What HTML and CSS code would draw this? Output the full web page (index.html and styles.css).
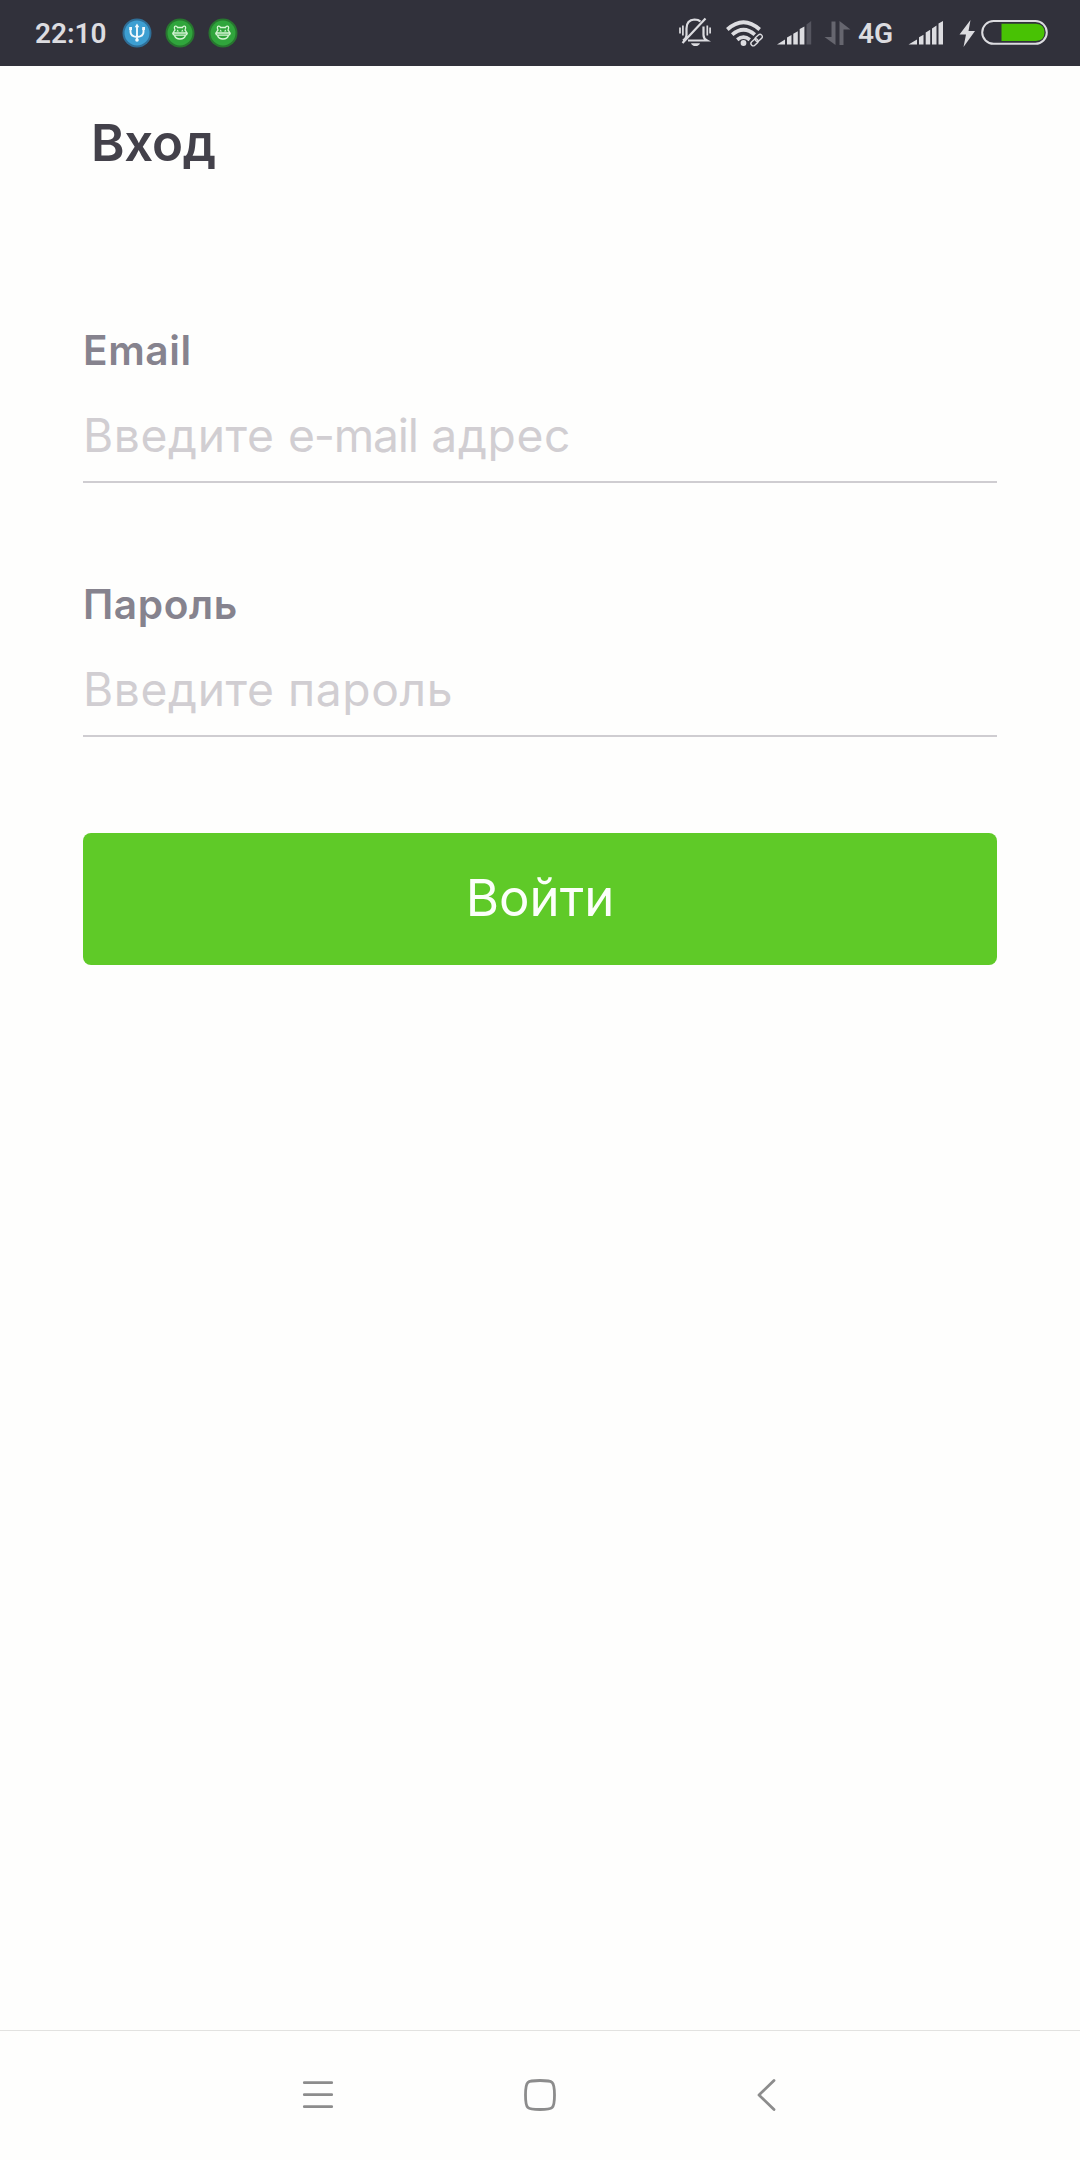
FILE: index.html
```html
<!DOCTYPE html>
<html lang="ru">
<head>
<meta charset="utf-8">
<title>Вход</title>
<link rel="stylesheet" href="styles.css">
</head>
<body>
<header class="status">
  <span class="clock">22:10</span>
  <svg class="badge" viewBox="122 18 30 30">
    <circle cx="137" cy="33" r="14.5" fill="#2f6f98"/><circle cx="137" cy="33" r="12.5" fill="#3d9fd2"/>
    <g fill="none" stroke="#f1f8fc" stroke-width="1.9"><path d="M137 26v14M130.500 28.500v3.500q0 4.500 6.500 5M143.500 28.500v3.500q0 4.500 -6.500 5"/></g>
    <path fill="#f1f8fc" d="M137 23.500l2.300 3.700h-4.600zM129.200 27h2.800v3h-2.800zM142.200 27h2.800v3h-2.800z"/><circle cx="137" cy="40" r="1.800" fill="#f1f8fc"/>
  </svg>
  <svg class="badge" viewBox="165 18 30 30">
    <circle cx="180" cy="33" r="14.500" fill="#27772f"/><circle cx="180" cy="33" r="12.500" fill="#30a53c"/>
    <g fill="none" stroke="#d8f5d6" stroke-width="1.300"><path d="M175 30q-1.500-3.500.5-3.800 1.500-.2 2 1.300h5q.5-1.500 2-1.300 2 .3.500 3.800 1.500 1.500 1.500 3h-13q0-1.500 1.500-3zM172.700 33.200h14.600q-.3 2-2 2h-10.600q-1.700 0-2-2zM174.500 35.500q1.200 3.500 5.500 3.500t5.500-3.500"/></g>
    <path fill="#d8f5d6" d="M176.500 31.500l1.200-2 1.200 2zM181.100 31.500l1.200-2 1.200 2z"/>
  </svg>
  <svg class="badge" viewBox="165 18 30 30">
    <circle cx="180" cy="33" r="14.500" fill="#27772f"/><circle cx="180" cy="33" r="12.500" fill="#30a53c"/>
    <g fill="none" stroke="#d8f5d6" stroke-width="1.300"><path d="M175 30q-1.500-3.500.5-3.800 1.500-.2 2 1.300h5q.5-1.500 2-1.300 2 .3.500 3.800 1.500 1.500 1.500 3h-13q0-1.500 1.500-3zM172.700 33.200h14.600q-.3 2-2 2h-10.600q-1.700 0-2-2zM174.500 35.500q1.200 3.500 5.500 3.500t5.500-3.500"/></g>
    <path fill="#d8f5d6" d="M176.500 31.500l1.200-2 1.200 2zM181.100 31.500l1.200-2 1.200 2z"/>
  </svg>
  <div class="indicators">
    <svg class="bell" viewBox="679 0 32 66">
      <g fill="none" stroke="#dcdce0" stroke-width="2.200"><path d="M686.500 35V28.500q0-8.500 8-9 4 0 6 2M703.500 26.500v8.500q0 3.500 3.500 5.500H688M682.500 43L705.500 18.500M686.500 34.500q0 4-3.500 6"/><path stroke-width="1.700" d="M682.900 25.500v10M680 27.500v6M707.300 25.500v10M710.100 27.500v6"/></g>
      <path fill="#dcdce0" d="M691 43.200h9q-1 2.800-4.500 2.800t-4.500-2.800z"/>
    </svg>
    <svg class="wifi" viewBox="726 0 37 66">
      <g fill="none" stroke="#dcdce0" stroke-width="3.700"><path d="M727.300 29.500q16.200-14.500 32.400 0M732.200 34.700q11.300-10 22.600 0M737.200 39.700q6.300-5 12.600 0"/></g>
      <circle cx="743.500" cy="43" r="2.900" fill="#dcdce0"/>
      <path fill="none" stroke="#31313b" stroke-width="6" d="M752 44.500l10-9"/>
      <g fill="none" stroke="#dcdce0" stroke-width="1.400"><rect x="-4" y="-2.300" width="8" height="4.600" rx="2.300" transform="translate(754.500 42.300) rotate(-42)"/><rect x="-4" y="-2.300" width="8" height="4.600" rx="2.300" transform="translate(758.700 37.800) rotate(-42)"/></g>
    </svg>
    <svg class="signal" viewBox="777 0 36 66">
      <path fill="#dcdce0" d="M777 44.500l8-5v5zM787 37.500l4.500-2.500v9.500H787zM793.300 33.700l4.500-2.500v13.300h-4.500zM799.700 29l4.700-2.500v18h-4.700z"/>
      <path fill="#55555f" d="M806.500 24.500l4.700-3.500v23.500h-4.700z"/>
    </svg>
    <svg class="data" viewBox="824 0 27 66"><path fill="#66666f" d="M831.500 21.500h4v23.500L824.500 37h7zM839.500 45h4V29.500h7L839.500 21z"/></svg>
    <span class="network">4G</span>
    <svg class="signal" viewBox="908 0 36 66"><path fill="#dcdce0" d="M908.500 44.500l8.500-5v5zM919 37.200l4.500-2.500v9.800H919zM925.700 32.500l4.500-2.700v14.700h-4.500zM932 28.500l4.500-3v19H932zM938.500 23.500l4.500-2.500v23.500h-4.500z"/></svg>
    <svg class="bolt" viewBox="959 0 16 66"><path fill="#dcdce0" d="M970.500 20L959.500 34.500h6.500L963.500 47l11.500-16h-6.500z"/></svg>
    <svg class="battery" viewBox="981 0 67 66"><rect x="982.200" y="21" width="64.600" height="22.800" rx="11.400" fill="none" stroke="#dcdce0" stroke-width="2"/><path fill="#48c204" d="M1001.500 23.800h34.500q8.500.8 8.500 8.600t-8.500 8.600h-34.500z"/></svg>
  </div>
</header>
<main class="screen">
  <h1 class="title">Вход</h1>
  <form class="form">
    <div class="field">
      <label class="label">Email</label>
      <div class="input" role="textbox">Введите <span class="latin">e-mail</span> адрес</div>
    </div>
    <div class="field field-password">
      <label class="label">Пароль</label>
      <div class="input" role="textbox">Введите пароль</div>
    </div>
    <button class="submit" type="button">Войти</button>
  </form>
</main>
<nav class="navbar">
  <svg viewBox="300 2075 36 40"><path d="M304.300 2082.700h27.400M304.300 2094.700h27.400M304.300 2106.700h27.400"/></svg>
  <svg viewBox="522 2075 36 40"><path d="M540 2080.500c13 0 14.500.3 14.500 14.500s-1.500 14.500-14.500 14.500-14.500-.3-14.500-14.500 1.500-14.500 14.500-14.500z"/></svg>
  <svg viewBox="750 2075 36 40"><path d="M775 2080.500L760 2095l15 14.500"/></svg>
</nav>
</body>
</html>
```
FILE: styles.css
```css
* { box-sizing: border-box; }

body {
  margin: 0;
  height: 2160px;
  display: flex;
  flex-direction: column;
  background: #fefefd;
  font-family: Inter, "Liberation Sans", sans-serif;
}

svg { display: block; flex: none; }

.status {
  height: 66px;
  flex: none;
  display: flex;
  align-items: center;
  padding: 0 32px 0 35px;
  background: #31313b;
  color: #dcdce0;
  font-family: Roboto, sans-serif;
  font-weight: 600;
  font-size: 28px;
  line-height: 66px;
}

.clock { width: 87px; padding-top: 2px; }
.badge { width: 30px; height: 30px; margin-right: 13px; }

.indicators { display: flex; margin-left: auto; height: 66px; }
.indicators svg { height: 66px; }
.bell { width: 32px; margin-right: 15px; }
.wifi { width: 37px; margin-right: 14px; }
.signal { width: 36px; }
.data { width: 27px; margin: 0 7px 0 11px; }
.network { width: 50px; padding-top: 1px; }
.bolt { width: 16px; margin: 0 6px 0 15px; }
.battery { width: 67px; }

.screen { flex: 1; padding: 47px 83px 0; }

.title {
  margin: 0 0 0 8px;
  color: #43414a;
  font-size: 51px;
  font-weight: 600;
  line-height: 60px;
  letter-spacing: -0.3px;
}

.form { padding-top: 153px; }

.field {
  height: 157px;
  margin-bottom: 97px;
  border-bottom: 2px solid #cfcdd1;
}

.field-password { margin-bottom: 96px; }

.label {
  display: block;
  height: 81px;
  color: #86838e;
  font-size: 40.6px;
  font-weight: 600;
  line-height: 50px;
  letter-spacing: 0.6px;
}

.input {
  color: #d1ced2;
  font-size: 46.2px;
  line-height: 56px;
  letter-spacing: 0.6px;
}

.latin { letter-spacing: -1.2px; }

.submit {
  display: block;
  width: 100%;
  height: 132px;
  padding: 0 0 2px;
  border: 0;
  border-radius: 8px;
  background: #5fca28;
  color: #fcfffa;
  font: 400 50.9px/130px Inter, sans-serif;
}

.navbar {
  height: 130px;
  flex: none;
  display: flex;
  align-items: center;
  gap: 186px;
  padding: 0 0 2px 300px;
  border-top: 1px solid #e2e2e0;
}

.navbar svg {
  width: 36px;
  height: 40px;
  fill: none;
  stroke: #8c8c8c;
  stroke-width: 2.8;
  stroke-linecap: round;
  stroke-linejoin: round;
}

.navbar svg:last-child { margin-left: 5px; }
```
